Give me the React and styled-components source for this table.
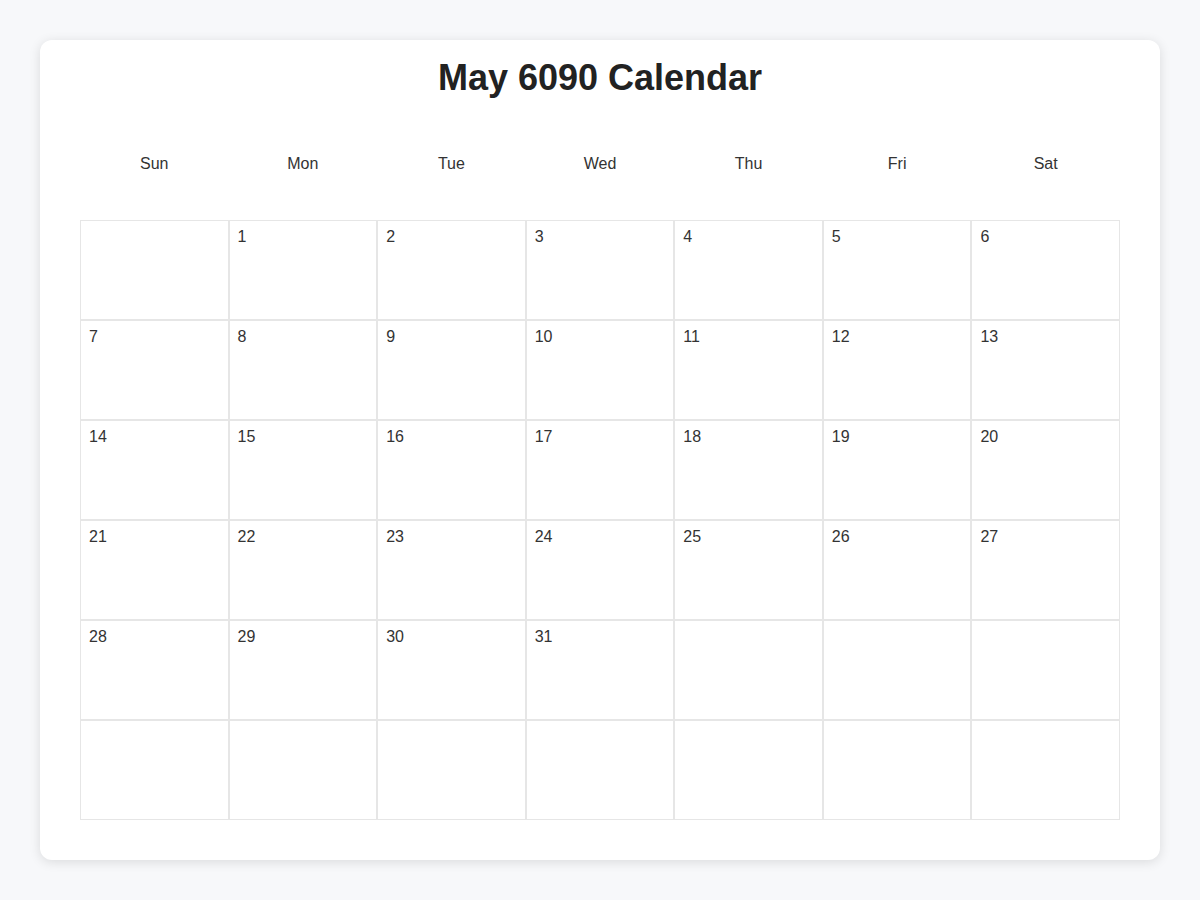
import styled, { createGlobalStyle } from "styled-components";

const GlobalStyle = createGlobalStyle`
  body {
    margin: 0;
    background: #f7f8fa;
    font-family: "Liberation Sans", Arial, sans-serif;
    color: #333;
  }
`;

const WEEKDAYS = ["Sun", "Mon", "Tue", "Wed", "Thu", "Fri", "Sat"];

// May 6090 starts on a Monday, 31 days, shown over 6 weeks
function buildCells() {
  const offset = 1;
  const cells = [];
  for (let i = 0; i < 42; i++) {
    const day = i - offset + 1;
    cells.push(day >= 1 && day <= 31 ? day : null);
  }
  return cells;
}

export default function App() {
  const cells = buildCells();
  return (
    <Page>
      <GlobalStyle />
      <Card>
        <Title>May 6090 Calendar</Title>
        <WeekRow>
          {WEEKDAYS.map((d) => (
            <WeekDay key={d}>{d}</WeekDay>
          ))}
        </WeekRow>
        <DayGrid>
          {cells.map((day, i) => (
            <DayCell key={i}>{day}</DayCell>
          ))}
        </DayGrid>
      </Card>
    </Page>
  );
}

const Page = styled.div`
  padding: 40px;
  min-height: 900px;
  box-sizing: border-box;
`;

const Card = styled.div`
  background: #fff;
  border-radius: 12px;
  box-shadow: 0 2px 12px rgba(0, 0, 0, 0.12);
  padding: 16px 40px 40px;
`;

const Title = styled.h1`
  margin: 0;
  text-align: center;
  font-size: 36px;
  line-height: 44px;
  font-weight: 700;
  color: #222;
`;

const WeekRow = styled.div`
  display: grid;
  grid-template-columns: repeat(7, 1fr);
  margin: 41px 0 33px;
`;

const WeekDay = styled.div`
  height: 46px;
  display: flex;
  align-items: center;
  justify-content: center;
  font-size: 16px;
  color: #333;
`;

const DayGrid = styled.div`
  display: grid;
  grid-template-columns: repeat(7, 1fr);
`;

const DayCell = styled.div`
  height: 100px;
  box-sizing: border-box;
  border: 1px solid #e6e6e6;
  padding: 7px 8px;
  font-size: 16px;
  line-height: 18px;
  color: #333;
`;
